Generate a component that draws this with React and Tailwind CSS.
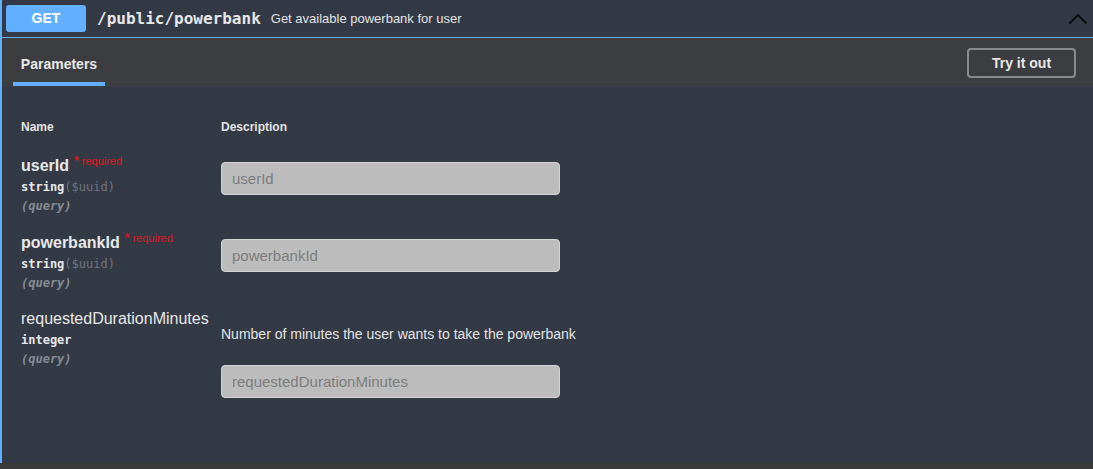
import React from 'react';

const params = [
    { name: 'userId', type: 'string', format: '($uuid)', required: true, placeholder: 'userId' },
    { name: 'powerbankId', type: 'string', format: '($uuid)', required: true, placeholder: 'powerbankId' },
    {
        name: 'requestedDurationMinutes',
        type: 'integer',
        required: false,
        description: 'Number of minutes the user wants to take the powerbank',
        placeholder: 'requestedDurationMinutes',
    },
];

const sans = { fontFamily: '"Liberation Sans", Arial, sans-serif' };

function ParamRow({ p }) {
    return (
        <div className="flex h-[76.5px]">
            {/* Name column */}
            <div className="w-[200px] shrink-0">
                <div className="flex h-[16px] items-start leading-none">
                    <span className={`text-[16px] text-[#e8e8e8] ${p.required ? 'font-bold' : ''}`}>{p.name}</span>
                    {p.required && (
                        <span className="ml-[5px] -mt-[3px] text-[11px] text-[#e0141e]">
                            <span className="text-[12px] font-bold">*</span>&nbsp;required
                        </span>
                    )}
                </div>
                <div className="mt-[3px] font-['DejaVu_Sans_Mono',monospace] text-[12px] leading-[20px]">
                    <span className="font-bold text-[#e8e8e8]">{p.type}</span>
                    {p.format && <span className="text-[#6f747c]">{p.format}</span>}
                </div>
                <div className="font-['DejaVu_Sans_Mono',monospace] text-[12px] leading-[18px] font-bold italic text-[#878b92]">
                    (query)
                </div>
            </div>

            {/* Description column */}
            <div className="flex-1">
                {p.description && (
                    <p className="mt-[15px] text-[14px] leading-[16px] text-[#e3e3e3]">{p.description}</p>
                )}
                <input
                    placeholder={p.placeholder}
                    disabled
                    className={`${p.description ? 'mt-[23px]' : 'mt-[4px]'} h-[33px] w-[339px] rounded-[4px] border border-[#d4d4d4] bg-[#bcbcbc] px-[10px] text-[15px] placeholder:text-[#7c7c7c]`}
                    style={sans}
                />
            </div>
        </div>
    );
}

export default function App() {
    return (
        <div className="h-[469px] w-full overflow-hidden bg-[#333a46]" style={sans}>
            <div className="flex h-[463px] flex-col border-l-2 border-[#61affe]">
                {/* Summary */}
                <div className="flex h-[38px] shrink-0 items-center border-b border-[#61affe] pl-[4px] pr-[5px]">
                    <span className="flex h-[27px] w-[80px] items-center justify-center rounded-[3px] bg-[#61affe] text-[14px] font-bold text-white">
                        GET
                    </span>
                    <span className="ml-[11px] font-['DejaVu_Sans_Mono',monospace] text-[16px] font-bold text-[#e6e6e6]">
                        /public/powerbank
                    </span>
                    <span className="ml-[10px] text-[13px] text-[#e3e3e3]">Get available powerbank for user</span>
                    <svg className="ml-auto" width="20" height="12" viewBox="0 0 20 12" fill="none">
                        <path d="M1.5 10.5 L10 2 L18.5 10.5" stroke="#0a0a0a" strokeWidth="1.8" />
                    </svg>
                </div>

                {/* Tab bar */}
                <div className="flex h-[49px] shrink-0 items-stretch justify-between bg-[#3c3d40] pl-[11px] pr-[17px]">
                    <div className="flex w-[92px] flex-col items-center justify-end">
                        <span className="mb-[7px] text-[14px] font-bold text-[#e8e8e8]">Parameters</span>
                        <div className="mb-[1px] h-[4px] w-full bg-[#61affe]" />
                    </div>
                    <button className="mt-[10px] h-[30px] w-[109px] rounded-[4px] border-2 border-[#8a8a8a] text-[14px] font-bold text-[#e8e8e8]">
                        Try it out
                    </button>
                </div>

                {/* Parameters table */}
                <div className="px-[19px] pt-[31px]">
                    <div className="flex text-[12px] font-bold text-[#e3e3e3]">
                        <div className="w-[200px]">Name</div>
                        <div>Description</div>
                    </div>
                    <div className="mt-[22px]">
                        {params.map((p) => (
                            <ParamRow key={p.name} p={p} />
                        ))}
                    </div>
                </div>
            </div>
            <div className="h-[6px] bg-[#3a3a3b]" />
        </div>
    );
}
